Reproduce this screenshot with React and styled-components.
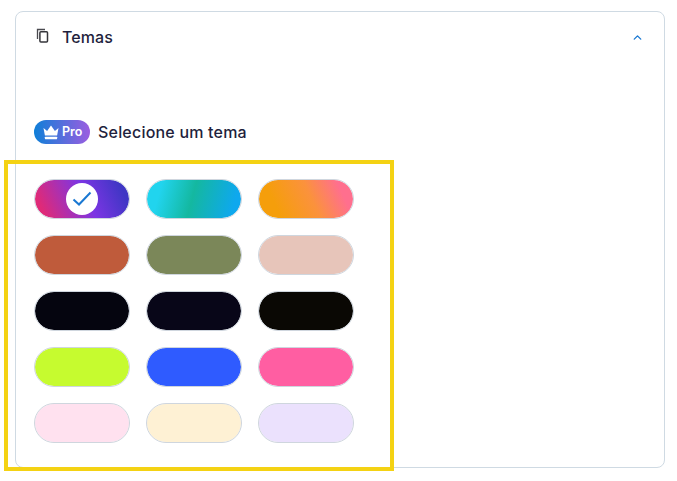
import React from 'react'
import styled, { createGlobalStyle } from 'styled-components'
import { ChevronUp } from 'lucide-react'

const themes = [
  { id: 'aurora', bg: 'linear-gradient(65deg, #df2a78 10%, #7c35e4 55%, #3f36c4 90%)', selected: true },
  { id: 'ocean', bg: 'linear-gradient(105deg, #21d4ee 15%, #14b8a0 48%, #0ea8ee 90%)' },
  { id: 'sunset', bg: 'linear-gradient(65deg, #f59e0b 20%, #fb923c 55%, #ff6f8e 85%)' },
  { id: 'brick', bg: '#bf5b3b' },
  { id: 'olive', bg: '#7b8759' },
  { id: 'blush', bg: '#e7c5ba' },
  { id: 'ink', bg: '#05050f' },
  { id: 'night', bg: '#080618' },
  { id: 'coal', bg: '#0a0804' },
  { id: 'lime', bg: '#c6fb2f' },
  { id: 'royal', bg: '#2f5bff' },
  { id: 'pink', bg: '#ff5ea2' },
  { id: 'rose', bg: '#ffe1ef' },
  { id: 'cream', bg: '#fef1d4' },
  { id: 'lilac', bg: '#ebe1fd' },
]

export default function App() {
  return (
    <Page>
      <GlobalStyle />
      <Card>
        <Header>
          <Title>
            <CopyIcon width="16" height="16" viewBox="0 0 16 16" fill="none">
              <path d="M2.5 11V1.5H10" stroke="#4a4a4f" strokeWidth="1.3" />
              <rect x="4.9" y="3.7" width="7.6" height="10.3" rx="1" stroke="#35353a" strokeWidth="1.5" />
            </CopyIcon>
            Temas
          </Title>
          <ChevronUp size={13} color="#1a78d2" strokeWidth={2.5} />
        </Header>
        <Body>
          <Heading>
            <ProBadge>
              <svg width="16" height="15" viewBox="0 0 16 15" fill="#fff">
                <path d="M.5 3l3.6 3L8 .6 11.9 6l3.6-3-1.4 7.6H1.9z" />
                <rect x="1.9" y="11.8" width="12.2" height="2.4" rx=".4" />
              </svg>
              Pro
            </ProBadge>
            Selecione um tema
          </Heading>
          <ThemeGrid>
            {themes.map(t => (
              <ThemePill key={t.id} $bg={t.bg}>
                {t.selected && (
                  <CheckKnob>
                    <svg width="20" height="16" viewBox="0 0 20 16" fill="none">
                      <path d="M1.5 8.5l5.5 5L18.5 1.5" stroke="#1a78d2" strokeWidth="2" />
                    </svg>
                  </CheckKnob>
                )}
              </ThemePill>
            ))}
          </ThemeGrid>
        </Body>
        <Highlight />
      </Card>
    </Page>
  )
}

const GlobalStyle = createGlobalStyle`
  html, body {
    margin: 0;
    background: #fff;
  }
  * {
    box-sizing: border-box;
  }
`

const Page = styled.div`
  width: 677px;
  height: 481px;
  padding: 11px 12px 13px 15px;
  font-family: Inter, "Noto Sans", sans-serif;
  color: #1f1f3d;
`

const Card = styled.section`
  position: relative;
  height: 457px;
  border: 1px solid #cfdae3;
  border-radius: 8px;
`

const Header = styled.header`
  display: flex;
  align-items: center;
  justify-content: space-between;
  padding: 15px 20px 1px 19px;
`

const Title = styled.div`
  display: flex;
  align-items: center;
  gap: 11px;
  font-size: 16px;
  font-weight: 500;
  letter-spacing: 0.1px;
  line-height: 20px;
`

const CopyIcon = styled.svg`
  margin-top: -2px;
`

const Body = styled.div`
  padding: 72px 18px 0;
`

const Heading = styled.div`
  display: flex;
  align-items: center;
  gap: 8px;
  font-size: 16px;
  font-weight: 500;
  letter-spacing: 0.2px;
  line-height: 24px;
`

const ProBadge = styled.span`
  display: inline-flex;
  align-items: center;
  gap: 3px;
  width: 56px;
  height: 24px;
  padding-left: 9px;
  border-radius: 12px;
  background: linear-gradient(90deg, #0f7fd8, #9b5de0);
  color: #fff;
  font-size: 12.5px;
  font-weight: 600;
  letter-spacing: 0;
`

const ThemeGrid = styled.div`
  display: grid;
  grid-template-columns: repeat(3, 96px);
  gap: 16px;
  margin-top: 35px;
`

const ThemePill = styled.button`
  display: flex;
  align-items: center;
  justify-content: center;
  height: 40px;
  padding: 0;
  border: 1px solid #cfd6de;
  border-radius: 20px;
  background: ${p => p.$bg};
  background-clip: padding-box;
`

const CheckKnob = styled.span`
  display: flex;
  align-items: center;
  justify-content: center;
  width: 32px;
  height: 32px;
  border-radius: 50%;
  background: #fff;
`

const Highlight = styled.div`
  position: absolute;
  left: -12px;
  top: 148px;
  width: 390px;
  height: 311px;
  border: 4px solid #f4d213;
  pointer-events: none;
`
